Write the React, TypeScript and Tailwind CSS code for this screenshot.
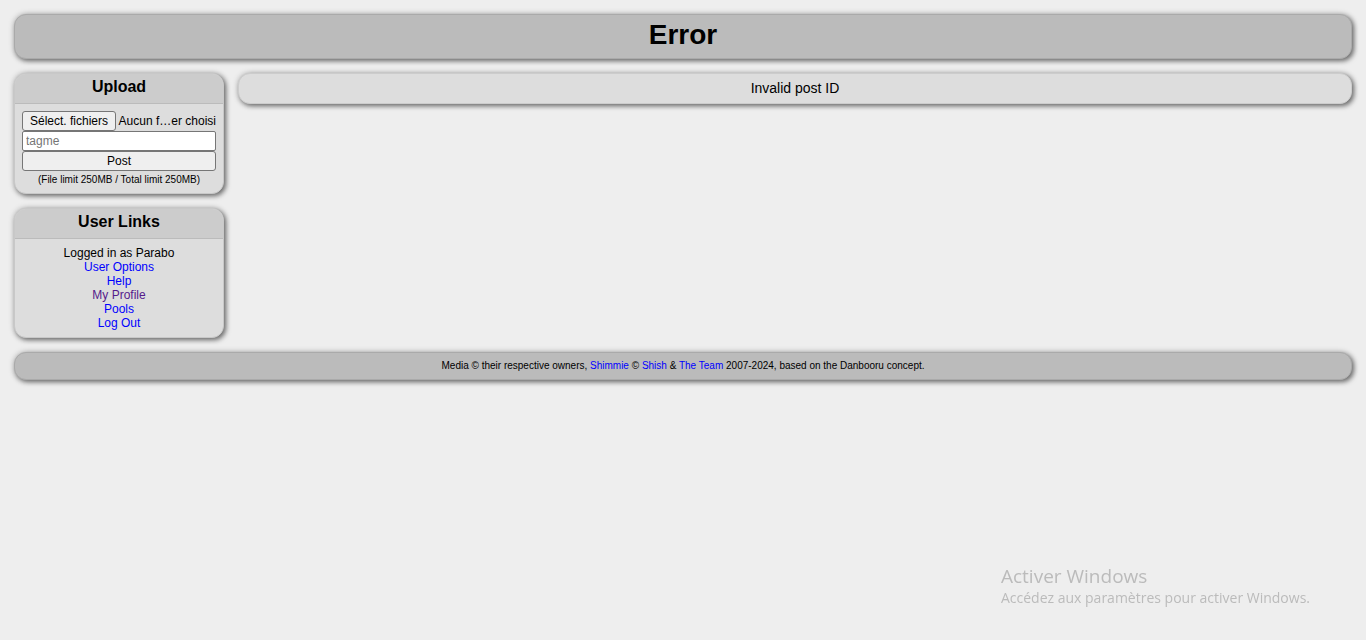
import { useState } from "react";
import type { ReactNode } from "react";

const PANEL =
  "rounded-xl border text-center shadow-[0_0_6px_rgba(0,0,0,0.2),2px_2px_5px_rgba(0,0,0,0.5)]";

const userLinks = [
  { label: "User Options", href: "#options", visited: false },
  { label: "Help", href: "#help", visited: false },
  { label: "My Profile", href: "#profile", visited: true },
  { label: "Pools", href: "#pools", visited: false },
  { label: "Log Out", href: "#logout", visited: false },
];

function Block({ title, children }: { title: string; children: ReactNode }) {
  return (
    <section className={`${PANEL} border-[#c8c8c8] bg-[#ddd]`}>
      <h3 className="rounded-t-[11px] border-b border-[#bbb] bg-[#ccc] pt-1 pb-[7px] text-base leading-[18px] font-bold">
        {title}
      </h3>
      <div className="p-[7px] text-xs leading-[14px]">{children}</div>
    </section>
  );
}

function UploadForm() {
  const [tags, setTags] = useState("");

  return (
    <form onSubmit={(e) => e.preventDefault()}>
      {/* Custom file picker, the native input stays for keyboard users */}
      <input id="files" type="file" multiple className="sr-only" />
      <label htmlFor="files" className="flex h-5 items-center justify-between whitespace-nowrap">
        <span className="flex h-5 items-center rounded-[3px] border border-[#767676] bg-[#efefef] px-[7px]">
          Sélect. fichiers
        </span>
        <span>Aucun f…er choisi</span>
      </label>
      <input
        type="text"
        aria-label="Tags"
        placeholder="tagme"
        value={tags}
        onChange={(e) => setTags(e.target.value)}
        className="block h-5 w-full rounded-[2px] border border-[#767676] bg-white px-[3px] placeholder:text-[#757575]"
      />
      <button
        type="submit"
        className="block h-5 w-full rounded-[3px] border border-[#767676] bg-[#efefef]"
      >
        Post
      </button>
      <small className="block pt-[3px] text-[10px] leading-3">
        (File limit 250MB / Total limit 250MB)
      </small>
    </form>
  );
}

export default function App() {
  return (
    <div className="flex min-h-screen flex-col gap-[14px] bg-[#eee] p-[14px] font-['Liberation_Sans',Arial,sans-serif] text-black">
      <header className={`${PANEL} border-[#aaa] bg-[#bbb] pt-1 pb-[7px]`}>
        <h1 className="text-[28px] leading-8 font-bold">Error</h1>
      </header>

      <div className="flex items-start gap-[14px]">
        <nav className="flex w-[210px] shrink-0 flex-col gap-[14px]">
          <Block title="Upload">
            <UploadForm />
          </Block>
          <Block title="User Links">
            <p>Logged in as Parabo</p>
            <ul>
              {userLinks.map((link) => (
                <li key={link.label}>
                  <a
                    href={link.href}
                    className={link.visited ? "text-[#551a8b]" : "text-[#00f]"}
                  >
                    {link.label}
                  </a>
                </li>
              ))}
            </ul>
          </Block>
        </nav>

        <main className={`${PANEL} grow border-[#ccc] bg-[#ddd] px-[7px] pt-1.5 pb-[7px]`}>
          <p className="text-sm leading-4">Invalid post ID</p>
        </main>
      </div>

      <footer className={`${PANEL} border-[#aaa] bg-[#bbb] p-[7px] text-[10px] leading-3`}>
        Media © their respective owners,{" "}
        <a href="#shimmie" className="text-[#00f]">Shimmie</a> ©{" "}
        <a href="#shish" className="text-[#00f]">Shish</a> &amp;{" "}
        <a href="#team" className="text-[#00f]">The Team</a> 2007-2024, based on the
        Danbooru concept.
      </footer>

      {/* Desktop activation notice */}
      <aside className="pointer-events-none fixed right-14 bottom-8 font-['Open_Sans','Noto_Sans',sans-serif] text-[#bbb]">
        <p className="text-[19px] leading-6">Activer Windows</p>
        <p className="text-sm leading-5">Accédez aux paramètres pour activer Windows.</p>
      </aside>
    </div>
  );
}
